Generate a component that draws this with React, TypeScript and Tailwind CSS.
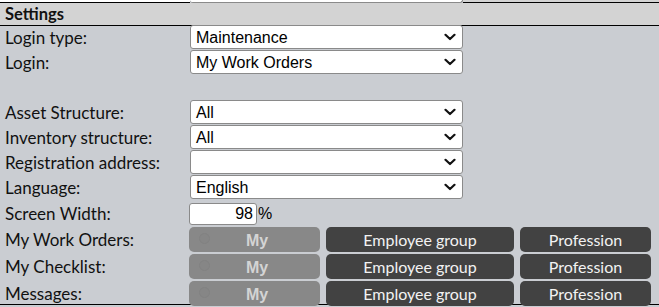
import React from "react";

function Chevron() {
  return (
    <svg
      width="12"
      height="8"
      viewBox="0 0 12 8"
      className="pointer-events-none absolute right-[6px] top-1/2 -translate-y-1/2"
    >
      <path d="M1.5 1.8 L6 6 L10.5 1.8" fill="none" stroke="#111" strokeWidth="2.2" strokeLinecap="round" strokeLinejoin="round" />
    </svg>
  );
}

function SelectBox({ value }: { value: string }) {
  return (
    <div className="relative ml-px h-[24px] w-[273px] rounded-[3px] border border-[#8a8a8a] bg-white">
      <div className="flex h-full items-center pl-[5px] pt-px font-['Liberation_Sans',Arial,sans-serif] text-[16px] leading-none text-black">
        {value}
      </div>
      <Chevron />
    </div>
  );
}

function Label({ children }: { children: React.ReactNode }) {
  return (
    <div className="w-[189px] shrink-0 pl-[5px] font-['Lato',sans-serif] text-[17px] leading-none text-[#111]">
      {children}
    </div>
  );
}

function SelectRow({ label, value }: { label: string; value: string }) {
  return (
    <div className="flex h-[25px] items-start">
      <div className="flex h-[24px] items-center">
        <Label>{label}</Label>
      </div>
      <SelectBox value={value} />
    </div>
  );
}

function ButtonRow({ label }: { label: string }) {
  return (
    <div className="flex h-[27px] items-start">
      <div className="flex h-[25px] items-center">
        <Label>{label}</Label>
      </div>
      <div className="flex gap-[6px]">
        <div className="relative flex h-[25px] w-[131px] items-center justify-center rounded-[5px] bg-[#888888] pl-[5px]">
          <span className="absolute left-[10px] top-[6px] h-[11px] w-[11px] rounded-full border border-[#828282] bg-[#868686]" />
          <span className="pt-[2px] font-['Liberation_Sans',Arial,sans-serif] text-[16px] font-bold leading-none text-[#d4d4d4]">
            My
          </span>
        </div>
        <div className="flex h-[25px] w-[188px] items-center justify-center rounded-[5px] bg-[#424242]">
          <span className="font-['Lato',sans-serif] text-[16px] leading-none text-[#f2f2f2]">Employee group</span>
        </div>
        <div className="flex h-[25px] w-[131px] items-center justify-center rounded-[5px] bg-[#424242]">
          <span className="font-['Lato',sans-serif] text-[16px] leading-none text-[#f2f2f2]">Profession</span>
        </div>
      </div>
    </div>
  );
}

export default function App() {
  return (
    <div className="h-[307px] w-[659px] overflow-hidden bg-[#cacdd2]">
      <div className="flex h-[3px]">
        <div className="h-full w-[190px] border-b border-black bg-white" />
        <div className="h-full w-[273px] rounded-b-[3px] border-b border-r border-[#8a8a8a] bg-white" />
        <div className="h-full flex-1 border-b border-black bg-[#d3d3d3]" />
      </div>
      <div className="h-[302px] border-b border-black">
        <div className="flex h-[23px] items-center border-b border-black bg-[#d3d3d3] pl-[5px]">
          <span className="font-['Lato',sans-serif] text-[16.5px] font-bold leading-none text-[#111]">Settings</span>
        </div>
        <div className="-mt-px">
          <SelectRow label="Login type:" value="Maintenance" />
          <SelectRow label="Login:" value="My Work Orders" />
          <div className="h-[25px]" />
          <SelectRow label="Asset Structure:" value="All" />
          <SelectRow label="Inventory structure:" value="All" />
          <SelectRow label="Registration address:" value="" />
          <SelectRow label="Language:" value="English" />
          <div className="flex h-[27px] items-center">
            <Label>Screen Width:</Label>
            <div className="flex h-[22px] w-[68px] items-center justify-end rounded-[3px] border border-[#8a8a8a] bg-white pr-[3px] pt-px font-['Liberation_Sans',Arial,sans-serif] text-[16px] leading-none text-black">
              98
            </div>
            <span className="ml-px pt-px font-['Liberation_Sans',Arial,sans-serif] text-[16px] leading-none text-black">%</span>
          </div>
          <ButtonRow label="My Work Orders:" />
          <ButtonRow label="My Checklist:" />
          <ButtonRow label="Messages:" />
        </div>
      </div>
    </div>
  );
}
